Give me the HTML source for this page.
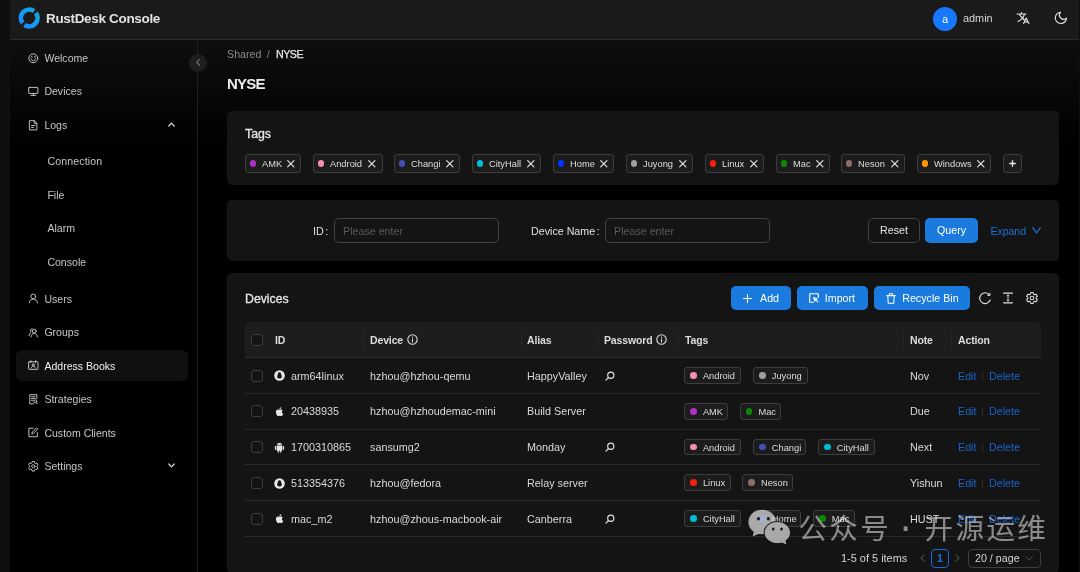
<!DOCTYPE html>
<html lang="en">
<head>
<meta charset="utf-8">
<title>RustDesk Console</title>
<style>
*{box-sizing:border-box;margin:0;padding:0}
html,body{width:1080px;height:572px;overflow:hidden;background:#000}
body{position:relative;font-family:"Liberation Sans","Noto Sans CJK SC",sans-serif;font-size:10.7px;color:#dcdcdc}
#app{position:absolute;left:0;top:0;width:1080px;height:572px;will-change:transform}
.abs{position:absolute}
.t{position:absolute;white-space:nowrap;line-height:14px;height:14px}
svg{display:block;position:absolute;overflow:visible}
#leftstrip{left:0;top:0;width:10px;height:572px;background:#0f0f0f}
#rightstrip{left:1078.5px;top:0;width:1.5px;height:572px;background:#0e0e0e}
#fade{left:10px;top:40px;width:1068.5px;height:105px;background:linear-gradient(#0f0f0f,#000)}
#header{left:10px;top:0;width:1068.5px;height:39.8px;background:#1a1a1a;border-bottom:1px solid #2c2c2c}
#sideline{left:197px;top:40px;width:1px;height:532px;background:#202020}
#collapse{left:189.1px;top:53.6px;width:18px;height:18px;border-radius:50%;background:#1f1f1f}
.mi{color:#c6c6c6;font-size:10.55px;margin-left:0.4px;margin-top:0.5px}
#active{left:16px;top:350px;width:172px;height:30.6px;border-radius:6px;background:#101010}
.card{position:absolute;left:227px;width:832px;background:#141414;border-radius:5px}
.chip{position:absolute;height:18.6px;border:1px solid #3d3d3d;border-radius:3px;background:#1c1c1c;font-size:9.3px;color:#dedede}
.chip i{position:absolute;left:3.8px;top:5.2px;width:6.6px;height:6.6px;border-radius:50%}
.chip b{position:absolute;left:16px;top:1px;line-height:17px;font-weight:400;white-space:nowrap}
.chip.sm{height:16.7px}
.chip.sm i{top:4.1px;left:5px}
.chip.sm b{top:0;line-height:16.2px;left:17.8px}
.inp{position:absolute;height:25px;border:1px solid #424242;border-radius:5px;background:#141414;color:#5a5a5a;font-size:10.7px;line-height:24.4px;padding-left:8px}
.btn{position:absolute;height:24.5px;border-radius:5px;font-size:10.7px;line-height:24px;color:#fff;white-space:nowrap}
.pri{background:#1a7ade}
.th{font-weight:700;color:#dcdcdc;font-size:10.5px;letter-spacing:-0.13px}
.td{color:#dadada;font-size:10.8px}
.lnk{color:#1a64cc;font-size:10.7px}
.sep{position:absolute;width:1px;height:16px;background:#272727}
.rl{position:absolute;left:245px;width:796px;height:1px;background:#2a2a2a}
.cb{position:absolute;left:251px;width:12px;height:12px;border:1px solid #3c3c3c;border-radius:3px;background:#141414}
</style>
</head>
<body>
<div id="app">
<div id="fade" class="abs"></div>
<div id="leftstrip" class="abs"></div>
<div id="rightstrip" class="abs"></div>
<div id="header" class="abs"></div>
<div id="sideline" class="abs"></div>
<div id="active" class="abs"></div>
<div id="collapse" class="abs"></div>
<svg style="left:195.9px;top:59.2px" width="4.2" height="6.7" viewBox="0 0 5 8" fill="none" stroke="#707070" stroke-width="1.5" stroke-linecap="round" stroke-linejoin="round"><path d="M4 0.8 1 4 4 7.2"/></svg>
<svg style="left:27.9px;top:52.7px" width="10.6" height="10.6" viewBox="0 0 12 12" fill="none" stroke="#c4c4c4" stroke-width="1.1" stroke-linecap="round" stroke-linejoin="round"><circle cx="6" cy="6" r="5"/><path d="M3.6 6.6C4 8.3 5 8.8 6 8.8S8 8.3 8.4 6.6"/><path d="M3.7 4.4H4.7M7.3 4.4H8.3"/></svg>
<div class="t mi" style="left:44px;top:50.0px;">Welcome</div>
<svg style="left:27.9px;top:85.7px" width="10.6" height="10.6" viewBox="0 0 12 12" fill="none" stroke="#c4c4c4" stroke-width="1.1" stroke-linecap="round" stroke-linejoin="round"><rect x="0.8" y="1.6" width="10.4" height="6.8" rx="0.6"/><path d="M6 8.4V10.4M3.2 10.6H8.8"/></svg>
<div class="t mi" style="left:44px;top:83.5px;">Devices</div>
<svg style="left:27.9px;top:119.7px" width="10.6" height="10.6" viewBox="0 0 12 12" fill="none" stroke="#c4c4c4" stroke-width="1.1" stroke-linecap="round" stroke-linejoin="round"><path d="M2 0.8H7.2L10 3.6V11.2H2Z"/><path d="M7 0.9V3.8H9.9"/><path d="M4 6.2H8M4 8.4H6.4"/></svg>
<div class="t mi" style="left:44px;top:117.2px;">Logs</div>
<svg style="left:167.5px;top:122px" width="7" height="5" viewBox="0 0 7 5" fill="none" stroke="#dcdcdc" stroke-width="1.2" stroke-linecap="round" stroke-linejoin="round"><path d="M0.8 4 3.5 1.2 6.2 4"/></svg>
<div class="t mi" style="left:47px;top:153.4px;letter-spacing:0.15px">Connection</div>
<div class="t mi" style="left:47px;top:187.2px;">File</div>
<div class="t mi" style="left:47px;top:220.5px;">Alarm</div>
<div class="t mi" style="left:47px;top:254.2px;">Console</div>
<svg style="left:27.9px;top:292.7px" width="10.6" height="10.6" viewBox="0 0 12 12" fill="none" stroke="#c4c4c4" stroke-width="1.1" stroke-linecap="round" stroke-linejoin="round"><circle cx="6" cy="3.8" r="2.7"/><path d="M1.4 11.2C1.6 8.4 3.6 6.9 6 6.9S10.4 8.4 10.6 11.2"/></svg>
<div class="t mi" style="left:44px;top:291.3px;">Users</div>
<svg style="left:27.9px;top:326.7px" width="10.6" height="10.6" viewBox="0 0 12 12" fill="none" stroke="#c4c4c4" stroke-width="1.1" stroke-linecap="round" stroke-linejoin="round"><circle cx="7" cy="4.6" r="2.2"/><path d="M3.4 11.2C3.6 8.8 5 7.4 7 7.4S10.4 8.8 10.6 11.2"/><path d="M4.6 2A2 2 0 0 0 3.6 5.6M3 6.6C1.8 7.2 1.2 8.4 1.1 9.8"/></svg>
<div class="t mi" style="left:44px;top:324.5px;">Groups</div>
<svg style="left:27.9px;top:359.7px" width="10.6" height="10.6" viewBox="0 0 12 12" fill="none" stroke="#c4c4c4" stroke-width="1.1" stroke-linecap="round" stroke-linejoin="round"><rect x="0.7" y="2" width="10.6" height="8.6" rx="0.6"/><path d="M3.3 0.8V2.8M8.7 0.8V2.8"/><circle cx="6" cy="5.4" r="1.3"/><path d="M3.8 9C4 7.6 4.9 7 6 7S8 7.6 8.2 9"/></svg>
<div class="t mi" style="left:44px;top:358.0px;color:#f0f0f0">Address Books</div>
<svg style="left:27.9px;top:393.7px" width="10.6" height="10.6" viewBox="0 0 12 12" fill="none" stroke="#c4c4c4" stroke-width="1.1" stroke-linecap="round" stroke-linejoin="round"><path d="M10 5.4V0.8H2V11.2H6"/><path d="M4 3.2H8M4 5.2H8M4 7.2H5.6"/><circle cx="8.2" cy="8.4" r="1.7"/><path d="M9.5 9.7 10.8 11"/></svg>
<div class="t mi" style="left:44px;top:391.5px;">Strategies</div>
<svg style="left:27.9px;top:426.7px" width="10.6" height="10.6" viewBox="0 0 12 12" fill="none" stroke="#c4c4c4" stroke-width="1.1" stroke-linecap="round" stroke-linejoin="round"><path d="M10.6 6.4V11H1V1.4H5.8"/><path d="M4.4 7.6 5 5.6 9.6 1 11 2.4 6.4 7Z"/></svg>
<div class="t mi" style="left:44px;top:425.0px;">Custom Clients</div>
<svg style="left:27.9px;top:460.7px" width="10.6" height="10.6" viewBox="0 0 12 12" fill="none" stroke="#c4c4c4" stroke-width="1.1" stroke-linecap="round" stroke-linejoin="round"><path d="M7.47 1.96 7.16 0.52 4.84 0.52 4.53 1.96 3.24 2.71 1.84 2.25 0.67 4.27 1.77 5.25 1.77 6.75 0.67 7.73 1.84 9.75 3.24 9.29 4.53 10.04 4.84 11.48 7.16 11.48 7.47 10.04 8.76 9.29 10.16 9.75 11.33 7.73 10.23 6.75 10.23 5.25 11.33 4.27 10.16 2.25 8.76 2.71Z"/><circle cx="6" cy="6" r="1.8"/></svg>
<div class="t mi" style="left:44px;top:458.5px;">Settings</div>
<svg style="left:167.5px;top:463px" width="7" height="5" viewBox="0 0 7 5" fill="none" stroke="#dcdcdc" stroke-width="1.2" stroke-linecap="round" stroke-linejoin="round"><path d="M0.8 1 3.5 3.8 6.2 1"/></svg>
<svg class="abs" style="left:18px;top:7px" width="22" height="22" viewBox="0 0 22 22">
 <defs><linearGradient id="lg" x1="0" y1="1" x2="1" y2="0"><stop offset="0" stop-color="#1a8cff"/><stop offset="1" stop-color="#0fa8e8"/></linearGradient></defs>
 <g fill="none" stroke="url(#lg)" stroke-width="4.7">
  <path d="M15.96 4.20 A8.3 8.3 0 0 0 4.57 16.00"/>
  <path d="M6.44 17.80 A8.3 8.3 0 0 0 17.83 6.00"/>
 </g>
</svg>
<div class="t" style="left:46px;top:11.0px;font-size:13.5px;font-weight:700;color:#e2e2e2;letter-spacing:-0.33px;line-height:16px;height:16px">RustDesk Console</div>
<div class="abs" style="left:933.4px;top:7.4px;width:24px;height:24px;border-radius:50%;background:#1677ff"></div>
<div class="t" style="left:942.3px;top:12.2px;font-size:10.5px;color:#fff">a</div>
<div class="t" style="left:963px;top:11.0px;font-size:10.9px;color:#d6d6d6">admin</div>
<svg style="left:1016px;top:11px" width="14" height="14" viewBox="0 0 14 14" fill="none" stroke="#e4e4e4" stroke-width="1.15" stroke-linecap="round" stroke-linejoin="round">
 <path d="M1 3H10M5.5 1.5V3M3.6 3.8 8.3 9M8.4 3.3C7.6 6.4 5 9 2 10.4"/>
 <path d="M7.6 12.5 10.2 7 12.9 12.5M8.5 10.8H12"/>
</svg>
<svg style="left:1052.9px;top:10.4px" width="15.75" height="15.75" viewBox="0 0 1024 1024" fill="none" stroke="#e4e4e4" stroke-width="74" stroke-linejoin="round">
 <path d="M493 148.500A364 364 0 1 0 875.500 531A271 271 0 0 1 493 148.500Z"/>
</svg>
<div class="t" style="left:227px;top:47.0px;color:#8a8a8a">Shared</div>
<div class="t" style="left:266.7px;top:47.0px;color:#7a7a7a">/</div>
<div class="t" style="left:276px;top:47.0px;color:#e6e6e6;letter-spacing:-0.5px;-webkit-text-stroke:0.25px #e6e6e6">NYSE</div>
<div class="t" style="left:227px;top:75.0px;font-size:15px;font-weight:700;color:#ececec;line-height:18px;height:18px;letter-spacing:-0.8px">NYSE</div>
<div class="card" style="top:111px;height:74px"></div>
<div class="t" style="left:245px;top:126.8px;font-size:12.3px;color:#e6e6e6;-webkit-text-stroke:0.3px #e6e6e6">Tags</div>
<div class="chip" style="left:245px;top:154.3px;width:56px"><i style="background:#ae2ec6"></i><b>AMK</b><svg style="right:5.6px;top:4.7px" width="7.6" height="7.6" viewBox="0 0 7 7" fill="none" stroke="#e6e6e6" stroke-width="1.05" stroke-linecap="round"><path d="M0.6 0.6 6.4 6.4M6.4 0.6 0.6 6.4"/></svg></div>
<div class="chip" style="left:313px;top:154.3px;width:69.6px"><i style="background:#f48fb1"></i><b>Android</b><svg style="right:5.6px;top:4.7px" width="7.6" height="7.6" viewBox="0 0 7 7" fill="none" stroke="#e6e6e6" stroke-width="1.05" stroke-linecap="round"><path d="M0.6 0.6 6.4 6.4M6.4 0.6 0.6 6.4"/></svg></div>
<div class="chip" style="left:394px;top:154.3px;width:66px"><i style="background:#3f51b5"></i><b>Changi</b><svg style="right:5.6px;top:4.7px" width="7.6" height="7.6" viewBox="0 0 7 7" fill="none" stroke="#e6e6e6" stroke-width="1.05" stroke-linecap="round"><path d="M0.6 0.6 6.4 6.4M6.4 0.6 0.6 6.4"/></svg></div>
<div class="chip" style="left:472px;top:154.3px;width:69px"><i style="background:#00bcd4"></i><b>CityHall</b><svg style="right:5.6px;top:4.7px" width="7.6" height="7.6" viewBox="0 0 7 7" fill="none" stroke="#e6e6e6" stroke-width="1.05" stroke-linecap="round"><path d="M0.6 0.6 6.4 6.4M6.4 0.6 0.6 6.4"/></svg></div>
<div class="chip" style="left:553px;top:154.3px;width:61px"><i style="background:#0433ff"></i><b>Home</b><svg style="right:5.6px;top:4.7px" width="7.6" height="7.6" viewBox="0 0 7 7" fill="none" stroke="#e6e6e6" stroke-width="1.05" stroke-linecap="round"><path d="M0.6 0.6 6.4 6.4M6.4 0.6 0.6 6.4"/></svg></div>
<div class="chip" style="left:626px;top:154.3px;width:67px"><i style="background:#9e9e9e"></i><b>Juyong</b><svg style="right:5.6px;top:4.7px" width="7.6" height="7.6" viewBox="0 0 7 7" fill="none" stroke="#e6e6e6" stroke-width="1.05" stroke-linecap="round"><path d="M0.6 0.6 6.4 6.4M6.4 0.6 0.6 6.4"/></svg></div>
<div class="chip" style="left:705px;top:154.3px;width:59px"><i style="background:#f4210b"></i><b>Linux</b><svg style="right:5.6px;top:4.7px" width="7.6" height="7.6" viewBox="0 0 7 7" fill="none" stroke="#e6e6e6" stroke-width="1.05" stroke-linecap="round"><path d="M0.6 0.6 6.4 6.4M6.4 0.6 0.6 6.4"/></svg></div>
<div class="chip" style="left:776px;top:154.3px;width:54px"><i style="background:#0b8a00"></i><b>Mac</b><svg style="right:5.6px;top:4.7px" width="7.6" height="7.6" viewBox="0 0 7 7" fill="none" stroke="#e6e6e6" stroke-width="1.05" stroke-linecap="round"><path d="M0.6 0.6 6.4 6.4M6.4 0.6 0.6 6.4"/></svg></div>
<div class="chip" style="left:841px;top:154.3px;width:64px"><i style="background:#8d6e63"></i><b>Neson</b><svg style="right:5.6px;top:4.7px" width="7.6" height="7.6" viewBox="0 0 7 7" fill="none" stroke="#e6e6e6" stroke-width="1.05" stroke-linecap="round"><path d="M0.6 0.6 6.4 6.4M6.4 0.6 0.6 6.4"/></svg></div>
<div class="chip" style="left:917px;top:154.3px;width:74px"><i style="background:#ff9800"></i><b>Windows</b><svg style="right:5.6px;top:4.7px" width="7.6" height="7.6" viewBox="0 0 7 7" fill="none" stroke="#e6e6e6" stroke-width="1.05" stroke-linecap="round"><path d="M0.6 0.6 6.4 6.4M6.4 0.6 0.6 6.4"/></svg></div>
<div class="chip" style="left:1003.2px;top:154.3px;width:19px"><svg style="left:5px;top:5px" width="7" height="7" viewBox="0 0 7 7" fill="none" stroke="#f0f0f0" stroke-width="1.3"><path d="M3.5 0.3V6.7M0.3 3.5H6.7"/></svg></div>
<div class="card" style="top:200px;height:61px"></div>
<div class="t" style="left:313px;top:224.0px;color:#e0e0e0">ID<span style="margin-left:1.5px">:</span></div>
<div class="inp" style="left:334px;top:218px;width:165px">Please enter</div>
<div class="t" style="left:531px;top:224.0px;color:#e0e0e0">Device Name<span style="margin-left:1.5px">:</span></div>
<div class="inp" style="left:605px;top:218px;width:165px">Please enter</div>
<div class="btn" style="left:868px;top:218.2px;width:52px;border:1px solid #424242;background:#141414;text-align:center;line-height:23.6px;color:#e6e6e6">Reset</div>
<div class="btn pri" style="left:925px;top:218.2px;width:53px;text-align:center;line-height:25.6px">Query</div>
<div class="t" style="left:990.4px;top:224.0px;color:#1a72d8;letter-spacing:-0.1px">Expand</div>
<svg style="left:1031.7px;top:227.2px" width="9" height="6.6" viewBox="0 0 9 6.6" fill="none" stroke="#1a72d8" stroke-width="1.15" stroke-linecap="round" stroke-linejoin="round"><path d="M0.7 0.7 4.5 5.8 8.3 0.7"/></svg>
<div class="card" style="top:273.4px;height:300px"></div>
<div class="t" style="left:245px;top:291.8px;font-size:12.3px;color:#e6e6e6;-webkit-text-stroke:0.3px #e6e6e6">Devices</div>
<div class="btn pri" style="left:731px;top:285.5px;width:59.8px"><svg style="left:12px;top:8px" width="9" height="9" viewBox="0 0 9 9" fill="none" stroke="#fff" stroke-width="1.1" stroke-linecap="round"><path d="M4.5 0.5V8.5M0.5 4.5H8.5"/></svg><span style="position:absolute;left:29px">Add</span></div>
<div class="btn pri" style="left:796.8px;top:285.5px;width:71.6px"><svg style="left:12.4px;top:7.3px" width="10" height="10" viewBox="0 0 10 10" fill="none" stroke="#fff" stroke-width="1.1" stroke-linecap="round" stroke-linejoin="round"><path d="M9.3 4.6V0.7H0.7V9.3H4.4"/><path d="M4.6 4.6 8 5.8 6.6 6.6 8.9 8.9M4.6 4.6 5.8 8 6.6 6.6"/></svg><span style="position:absolute;left:28px">Import</span></div>
<div class="btn pri" style="left:874.2px;top:285.5px;width:95.8px"><svg style="left:12px;top:7px" width="10" height="11" viewBox="0 0 10 11" fill="none" stroke="#fff" stroke-width="1.05" stroke-linecap="round" stroke-linejoin="round"><path d="M0.8 2.6H9.2M3.4 2.4V0.8H6.6V2.4M1.8 2.8 2.2 10.2H7.8L8.2 2.8"/></svg><span style="position:absolute;left:28px">Recycle Bin</span></div>
<svg style="left:978.7px;top:291.8px" width="12" height="12" viewBox="0 0 12 12" fill="none" stroke="#e0e0e0" stroke-width="1.15" stroke-linecap="round" stroke-linejoin="round"><path d="M11.2 8A5.4 5.4 0 1 1 10.4 2.9"/><path d="M10.9 1.2V3.4H8.7" stroke-width="1"/></svg>
<svg style="left:1003px;top:292px" width="10" height="12" viewBox="0 0 10 12" fill="none" stroke="#e0e0e0" stroke-width="1.15" stroke-linecap="round" stroke-linejoin="round"><path d="M0.6 1.2H9.4M0.6 10.8H9.4" stroke-width="1.3"/><path d="M5 2.8V9.2M4.2 4 5 2.9 5.8 4M4.2 8 5 9.1 5.8 8" stroke-width="0.8"/></svg>
<svg style="left:1026px;top:292px" width="12" height="12" viewBox="0 0 12 12" fill="none" stroke="#e0e0e0" stroke-width="1.05" stroke-linejoin="round"><path d="M7.47 1.96 7.16 0.52 4.84 0.52 4.53 1.96 3.24 2.71 1.84 2.25 0.67 4.27 1.77 5.25 1.77 6.75 0.67 7.73 1.84 9.75 3.24 9.29 4.53 10.04 4.84 11.48 7.16 11.48 7.47 10.04 8.76 9.29 10.16 9.75 11.33 7.73 10.23 6.75 10.23 5.25 11.33 4.27 10.16 2.25 8.76 2.71Z"/><circle cx="6" cy="6" r="1.8"/></svg>
<div class="abs" style="left:245px;top:321.7px;width:796px;height:35.69999999999999px;background:#1d1d1d;border-radius:5px 5px 0 0"></div>
<div class="cb" style="top:333.6px"></div>
<div class="t th" style="left:275px;top:333.0px;">ID</div>
<div class="t th" style="left:370px;top:333.0px;">Device</div>
<div class="t th" style="left:527px;top:333.0px;">Alias</div>
<div class="t th" style="left:604px;top:333.0px;">Password</div>
<div class="t th" style="left:685px;top:333.0px;">Tags</div>
<div class="t th" style="left:910px;top:333.0px;">Note</div>
<div class="t th" style="left:958px;top:333.0px;">Action</div>
<svg style="left:406.5px;top:334.1px" width="11" height="11" viewBox="0 0 11 11" fill="none" stroke="#dcdcdc" stroke-width="1.1" stroke-linecap="round"><circle cx="5.5" cy="5.5" r="4.7"/><path d="M5.5 5V8"/><path d="M5.5 3.1V3.3" stroke-width="1.2"/></svg>
<svg style="left:655.5px;top:334.1px" width="11" height="11" viewBox="0 0 11 11" fill="none" stroke="#dcdcdc" stroke-width="1.1" stroke-linecap="round"><circle cx="5.5" cy="5.5" r="4.7"/><path d="M5.5 5V8"/><path d="M5.5 3.1V3.3" stroke-width="1.2"/></svg>
<div class="sep" style="left:363.2px;top:331.6px"></div>
<div class="sep" style="left:521px;top:331.6px"></div>
<div class="sep" style="left:598px;top:331.6px"></div>
<div class="sep" style="left:678px;top:331.6px"></div>
<div class="sep" style="left:903px;top:331.6px"></div>
<div class="sep" style="left:951px;top:331.6px"></div>
<div class="rl" style="top:357.29999999999995px"></div>
<div class="rl" style="top:393.02px"></div>
<div class="cb" style="top:369.6px"></div>
<svg style="left:273.8px;top:370.1px" width="11" height="11" viewBox="0 0 11 11"><circle cx="5.5" cy="5.5" r="5.3" fill="#e6e6e6"/><path d="M5.5 2.2C4.2 2.2 3.7 3.4 3.9 4.6 3.2 5.6 3 6.6 3.4 7.8 4.4 8.8 6.6 8.8 7.6 7.8 8 6.6 7.8 5.6 7.1 4.6 7.3 3.4 6.8 2.2 5.5 2.2Z" fill="#141414"/></svg>
<div class="t td" style="left:291px;top:369.0px;">arm64linux</div>
<div class="t td" style="left:370px;top:369.0px;">hzhou@hzhou-qemu</div>
<div class="t td" style="left:527px;top:369.0px;">HappyValley</div>
<svg style="left:605px;top:370.6px" width="10" height="10" viewBox="0 0 10 10" fill="none" stroke="#e6e6e6" stroke-width="1.15" stroke-linecap="round"><circle cx="5.8" cy="4.2" r="3.1"/><path d="M3.5 6.5 0.9 9.1"/></svg>
<div class="chip sm" style="left:684.1px;top:367.3px;width:57.1px"><i style="background:#f48fb1"></i><b>Android</b></div>
<div class="chip sm" style="left:753px;top:367.3px;width:55.2px"><i style="background:#9e9e9e"></i><b>Juyong</b></div>
<div class="t td" style="left:910px;top:369.0px;">Nov</div>
<div class="t lnk" style="left:958px;top:369.0px;">Edit</div>
<div class="abs" style="left:982px;top:371.6px;width:1px;height:9px;background:#2b2b2b"></div>
<div class="t lnk" style="left:989px;top:369.0px;">Delete</div>
<div class="rl" style="top:428.74px"></div>
<div class="cb" style="top:405.4px"></div>
<svg style="left:273.8px;top:405.9px" width="11" height="11" viewBox="0 0 11 11" fill="#e6e6e6"><path d="M7.9 5.9C7.9 4.8 8.8 4.3 8.85 4.25 8.3 3.5 7.5 3.4 7.2 3.4 6.5 3.3 5.9 3.8 5.55 3.8 5.2 3.8 4.7 3.4 4.1 3.4 3.35 3.4 2.65 3.85 2.25 4.5 1.45 5.9 2.05 7.9 2.8 9 3.2 9.55 3.65 10.15 4.25 10.15 4.8 10.1 5.05 9.8 5.75 9.8 6.45 9.8 6.65 10.15 7.25 10.1 7.9 10.1 8.3 9.55 8.65 9 9.1 8.4 9.25 7.8 9.3 7.75 9.25 7.75 7.9 7.25 7.9 5.9ZM6.85 2.65C7.15 2.25 7.4 1.7 7.35 1.15 6.9 1.15 6.3 1.45 5.95 1.85 5.65 2.2 5.4 2.75 5.45 3.3 5.95 3.35 6.5 3.05 6.85 2.65Z"/></svg>
<div class="t td" style="left:291px;top:404.0px;">20438935</div>
<div class="t td" style="left:370px;top:404.0px;">hzhou@hzhoudemac-mini</div>
<div class="t td" style="left:527px;top:404.0px;">Build Server</div>
<div class="chip sm" style="left:684.1px;top:403.0px;width:44.1px"><i style="background:#ae2ec6"></i><b>AMK</b></div>
<div class="chip sm" style="left:739.6px;top:403.0px;width:41.9px"><i style="background:#0b8a00"></i><b>Mac</b></div>
<div class="t td" style="left:910px;top:404.0px;">Due</div>
<div class="t lnk" style="left:958px;top:404.0px;">Edit</div>
<div class="abs" style="left:982px;top:407.4px;width:1px;height:9px;background:#2b2b2b"></div>
<div class="t lnk" style="left:989px;top:404.0px;">Delete</div>
<div class="rl" style="top:464.46px"></div>
<div class="cb" style="top:441.2px"></div>
<svg style="left:273.8px;top:441.7px" width="11" height="11" viewBox="0 0 11 11" fill="#e6e6e6"><path d="M2.7 3.9H8.3V8.3A0.5 0.5 0 0 1 7.8 8.8H7.3V10.1A0.6 0.6 0 0 1 6.1 10.1V8.8H4.9V10.1A0.6 0.6 0 0 1 3.7 10.1V8.8H3.2A0.5 0.5 0 0 1 2.7 8.3Z"/><rect x="0.9" y="3.9" width="1.3" height="3.9" rx="0.65"/><rect x="8.8" y="3.9" width="1.3" height="3.9" rx="0.65"/><path d="M2.7 3.5C2.8 2.5 3.3 1.8 4 1.4L3.5 0.6 3.7 0.5 4.2 1.3C4.6 1.1 5 1 5.5 1S6.4 1.1 6.8 1.3L7.3 0.5 7.5 0.6 7 1.4C7.7 1.8 8.2 2.5 8.3 3.5ZM4.3 2.1A0.3 0.3 0 1 0 4.3 2.7 0.3 0.3 0 0 0 4.3 2.1ZM6.7 2.1A0.3 0.3 0 1 0 6.7 2.7 0.3 0.3 0 0 0 6.7 2.1Z"/></svg>
<div class="t td" style="left:291px;top:440.0px;">1700310865</div>
<div class="t td" style="left:370px;top:440.0px;">sansumg2</div>
<div class="t td" style="left:527px;top:440.0px;">Monday</div>
<svg style="left:605px;top:442.2px" width="10" height="10" viewBox="0 0 10 10" fill="none" stroke="#e6e6e6" stroke-width="1.15" stroke-linecap="round"><circle cx="5.8" cy="4.2" r="3.1"/><path d="M3.5 6.5 0.9 9.1"/></svg>
<div class="chip sm" style="left:684.1px;top:438.7px;width:57.1px"><i style="background:#f48fb1"></i><b>Android</b></div>
<div class="chip sm" style="left:753px;top:438.7px;width:53.2px"><i style="background:#3f51b5"></i><b>Changi</b></div>
<div class="chip sm" style="left:818px;top:438.7px;width:57.2px"><i style="background:#00bcd4"></i><b>CityHall</b></div>
<div class="t td" style="left:910px;top:440.0px;">Next</div>
<div class="t lnk" style="left:958px;top:440.0px;">Edit</div>
<div class="abs" style="left:982px;top:443.2px;width:1px;height:9px;background:#2b2b2b"></div>
<div class="t lnk" style="left:989px;top:440.0px;">Delete</div>
<div class="rl" style="top:500.18px"></div>
<div class="cb" style="top:477.0px"></div>
<svg style="left:273.8px;top:477.5px" width="11" height="11" viewBox="0 0 11 11"><circle cx="5.5" cy="5.5" r="5.3" fill="#e6e6e6"/><path d="M5.5 2.2C4.2 2.2 3.7 3.4 3.9 4.6 3.2 5.6 3 6.6 3.4 7.8 4.4 8.8 6.6 8.8 7.6 7.8 8 6.6 7.8 5.6 7.1 4.6 7.3 3.4 6.8 2.2 5.5 2.2Z" fill="#141414"/></svg>
<div class="t td" style="left:291px;top:476.0px;">513354376</div>
<div class="t td" style="left:370px;top:476.0px;">hzhou@fedora</div>
<div class="t td" style="left:527px;top:476.0px;">Relay server</div>
<div class="chip sm" style="left:684.1px;top:474.4px;width:46.6px"><i style="background:#f4210b"></i><b>Linux</b></div>
<div class="chip sm" style="left:742.2px;top:474.4px;width:51.0px"><i style="background:#8d6e63"></i><b>Neson</b></div>
<div class="t td" style="left:910px;top:476.0px;">Yishun</div>
<div class="t lnk" style="left:958px;top:476.0px;">Edit</div>
<div class="abs" style="left:982px;top:479.0px;width:1px;height:9px;background:#2b2b2b"></div>
<div class="t lnk" style="left:989px;top:476.0px;">Delete</div>
<div class="rl" style="top:535.9px"></div>
<div class="cb" style="top:512.8px"></div>
<svg style="left:273.8px;top:513.3px" width="11" height="11" viewBox="0 0 11 11" fill="#e6e6e6"><path d="M7.9 5.9C7.9 4.8 8.8 4.3 8.85 4.25 8.3 3.5 7.5 3.4 7.2 3.4 6.5 3.3 5.9 3.8 5.55 3.8 5.2 3.8 4.7 3.4 4.1 3.4 3.35 3.4 2.65 3.85 2.25 4.5 1.45 5.9 2.05 7.9 2.8 9 3.2 9.55 3.65 10.15 4.25 10.15 4.8 10.1 5.05 9.8 5.75 9.8 6.45 9.8 6.65 10.15 7.25 10.1 7.9 10.1 8.3 9.55 8.65 9 9.1 8.4 9.25 7.8 9.3 7.75 9.25 7.75 7.9 7.25 7.9 5.9ZM6.85 2.65C7.15 2.25 7.4 1.7 7.35 1.15 6.9 1.15 6.3 1.45 5.95 1.85 5.65 2.2 5.4 2.75 5.45 3.3 5.95 3.35 6.5 3.05 6.85 2.65Z"/></svg>
<div class="t td" style="left:291px;top:512.0px;">mac_m2</div>
<div class="t td" style="left:370px;top:512.0px;">hzhou@zhous-macbook-air</div>
<div class="t td" style="left:527px;top:512.0px;">Canberra</div>
<svg style="left:605px;top:513.8px" width="10" height="10" viewBox="0 0 10 10" fill="none" stroke="#e6e6e6" stroke-width="1.15" stroke-linecap="round"><circle cx="5.8" cy="4.2" r="3.1"/><path d="M3.5 6.5 0.9 9.1"/></svg>
<div class="chip sm" style="left:684.1px;top:510.1px;width:57.1px"><i style="background:#00bcd4"></i><b>CityHall</b></div>
<div class="chip sm" style="left:753px;top:510.1px;width:48.2px"><i style="background:#0433ff"></i><b>Home</b></div>
<div class="chip sm" style="left:813px;top:510.1px;width:42.2px"><i style="background:#0b8a00"></i><b>Mac</b></div>
<div class="t td" style="left:910px;top:512.0px;">HUST</div>
<div class="t lnk" style="left:958px;top:512.0px;">Edit</div>
<div class="abs" style="left:982px;top:514.8px;width:1px;height:9px;background:#2b2b2b"></div>
<div class="t lnk" style="left:989px;top:512.0px;">Delete</div>
<div class="t" style="left:841px;top:551.2px;color:#d6d6d6;font-size:10.95px">1-5 of 5 items</div>
<svg style="left:920px;top:554px" width="5" height="8" viewBox="0 0 5 8" fill="none" stroke="#4a4a4a" stroke-width="1.1" stroke-linecap="round" stroke-linejoin="round"><path d="M4 0.8 1 4 4 7.2"/></svg>
<div class="abs" style="left:931px;top:549px;width:18px;height:18.6px;border:1px solid #1668dc;border-radius:4px"></div>
<div class="t" style="left:937px;top:551.0px;color:#1a72d8;font-weight:700">1</div>
<svg style="left:955px;top:554px" width="5" height="8" viewBox="0 0 5 8" fill="none" stroke="#4a4a4a" stroke-width="1.1" stroke-linecap="round" stroke-linejoin="round"><path d="M1 0.8 4 4 1 7.2"/></svg>
<div class="abs" style="left:968.2px;top:549px;width:73.2px;height:18.6px;border:1px solid #3e3e3e;border-radius:4px"></div>
<div class="t" style="left:975px;top:551.0px;color:#d6d6d6">20 / page</div>
<svg style="left:1024.8px;top:556px" width="8" height="5" viewBox="0 0 8 5" fill="none" stroke="#4c4c4c" stroke-width="1" stroke-linecap="round" stroke-linejoin="round"><path d="M0.7 0.7 4 4.1 7.3 0.7"/></svg>
<svg style="left:744px;top:501.8px" width="56" height="48" viewBox="744 502 56 48">
 <g opacity="0.8">
  <g fill="#cdcdcd">
   <ellipse cx="762.2" cy="522" rx="13.8" ry="12.2"/>
   <path d="M754.5 529 752.6 536.6 760.5 533Z"/>
  </g>
  <ellipse cx="777.3" cy="532.6" rx="13.7" ry="11.5" fill="#1a1a1a"/>
  <g fill="#cdcdcd">
   <ellipse cx="777.3" cy="532.6" rx="12.7" ry="10.5"/>
   <path d="M780 541.5 786.2 544.4 785.2 538.5Z"/>
  </g>
 </g>
 <g fill="#1c1c1c">
  <ellipse cx="758.5" cy="518.7" rx="1.6" ry="1.7"/><ellipse cx="768.4" cy="518.7" rx="1.6" ry="1.7"/>
  <ellipse cx="773.2" cy="529" rx="1.4" ry="1.5"/><ellipse cx="781.5" cy="529" rx="1.4" ry="1.5"/>
 </g>
</svg>
<div class="t" style="left:798.3px;top:508.6px;height:40px;line-height:40px;font-size:28.6px;letter-spacing:2.4px;font-weight:400;color:rgba(255,255,255,0.5)">公众号</div>
<div class="t" id="wmdot" style="left:899.8px;top:509.7px;height:40px;line-height:40px;font-size:37px;font-family:'DejaVu Sans','Noto Sans CJK SC',sans-serif;color:rgba(255,255,255,0.5)">·</div>
<div class="t" style="left:924.4px;top:508.6px;height:40px;line-height:40px;font-size:28.6px;letter-spacing:2.4px;font-weight:400;color:rgba(255,255,255,0.5)">开源运维</div>
</div>
</body>
</html>
